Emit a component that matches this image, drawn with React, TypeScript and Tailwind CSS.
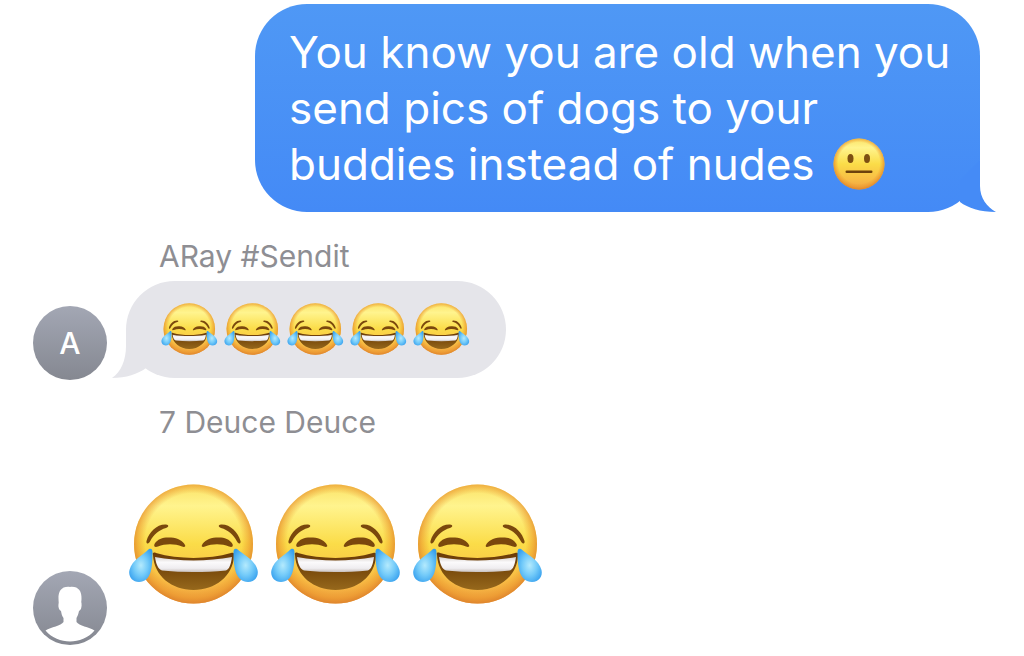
import type { ReactNode } from 'react';

interface EmojiProps {
  className?: string;
}

function EmojiDefs() {
  return (
    <svg className="absolute h-0 w-0" aria-hidden="true">
      <defs>
        <linearGradient id="face" x1="0" y1="0" x2="0" y2="1">
          <stop offset="0" stopColor="#fbe266" />
          <stop offset="0.18" stopColor="#fff48e" />
          <stop offset="0.5" stopColor="#fbdc48" />
          <stop offset="0.8" stopColor="#f8bd45" />
          <stop offset="1" stopColor="#f0a340" />
        </linearGradient>
        <radialGradient id="faceEdge" cx="0.5" cy="0.48" r="0.52">
          <stop offset="0.78" stopColor="#ea942c" stopOpacity="0" />
          <stop offset="0.9" stopColor="#ea942c" stopOpacity="0.55" />
          <stop offset="1" stopColor="#de832c" stopOpacity="0.95" />
        </radialGradient>
        <linearGradient id="teeth" x1="0" y1="0" x2="0" y2="1">
          <stop offset="0" stopColor="#d9d3d0" />
          <stop offset="0.35" stopColor="#fbfafb" />
          <stop offset="0.75" stopColor="#efedf0" />
          <stop offset="1" stopColor="#c9c1be" />
        </linearGradient>
        <linearGradient id="mouth" x1="0" y1="0" x2="0" y2="1">
          <stop offset="0" stopColor="#6a3a08" />
          <stop offset="0.5" stopColor="#7c4d0d" />
          <stop offset="1" stopColor="#96681c" />
        </linearGradient>
        <radialGradient id="tear" cx="0.5" cy="0.5" r="0.6">
          <stop offset="0" stopColor="#b4eafd" />
          <stop offset="0.5" stopColor="#74cbf9" />
          <stop offset="1" stopColor="#359fee" />
        </radialGradient>
      </defs>
    </svg>
  );
}

function JoyEmoji({ className }: EmojiProps) {
  return (
    <svg viewBox="0 0 130 120" className={className} role="img" aria-label="face with tears of joy">
      <circle cx="64.5" cy="60" r="59.5" fill="url(#face)" />
      <circle cx="64.5" cy="60" r="59.5" fill="url(#faceEdge)" />
      <g fill="#7a480d">
        <path d="M17.500 57C20 48 28 40 37 40.5C40 41 40 43 37 44C30 46 25 50 21 57.5C19 60.500 17 60 17.500 57Z" />
        <path d="M111.500 57C109 48 101 40 92 40.500C89 41 89 43 92 44C99 46 104 50 108 57.500C110 60.500 112 60 111.500 57Z" />
        <path d="M25.500 60C29 54 35 53 42 53.500C49 54 54 57 56 61C57 63 55 63.500 53 62.500C46 59.500 36 59.500 29 62.500C26 63.500 24.500 62.500 25.500 60Z" />
        <path d="M103.500 60C100 54 94 53 87 53.500C80 54 75 57 73 61C72 63 74 63.500 76 62.500C83 59.500 93 59.500 100 62.500C103 63.500 104.500 62.500 103.500 60Z" />
      </g>
      <path
        d="M24 71C23 69 24.500 68 27 69C50 75.500 79 75.500 102 69C104.500 68 106 69 105 72C104 92 86 106 64.500 106C43 106 25 92 24 71Z"
        fill="url(#mouth)"
      />
      <path
        d="M26 73C50 77.500 79 77.500 103 73C102 80 100.500 85 97 86.500C75 88.500 54 88.500 33 86.500C29 85 27 80 26 73Z"
        fill="url(#teeth)"
      />
      <path d="M20 65C23 64 23.500 66 23.500 69C23.500 84 22 98 10 98C3 98 -1 92 0.500 86C3 76 14 71 20 65Z" fill="url(#tear)" />
      <path d="M108 65C105 64 104.500 66 104.500 69C104.500 84 107 98 119 98C126 98 130 92 128.500 86C126 76 115 71 108 65Z" fill="url(#tear)" />
    </svg>
  );
}

function NeutralEmoji({ className }: EmojiProps) {
  return (
    <svg viewBox="0 0 52 52" className={className} role="img" aria-label="neutral face">
      <circle cx="26" cy="26" r="25.500" fill="url(#face)" />
      <circle cx="26" cy="26" r="25.500" fill="url(#faceEdge)" />
      <ellipse cx="17.500" cy="20.500" rx="3" ry="4.500" fill="#7d4f12" />
      <ellipse cx="34" cy="20.500" rx="3" ry="4.500" fill="#7d4f12" />
      <rect x="12.500" y="32.500" width="27" height="2.500" rx="1.250" fill="#6d420c" />
    </svg>
  );
}

function Avatar({ label, children }: { label: string; children: ReactNode }) {
  return (
    <div
      role="img"
      aria-label={label}
      className="flex size-[74px] shrink-0 items-center justify-center overflow-hidden rounded-full bg-linear-to-b from-[#a3a7b4] to-[#858891] text-3xl font-medium text-white"
    >
      {children}
    </div>
  );
}

function SenderName({ children }: { children: ReactNode }) {
  return <h2 className="pl-[126px] text-3xl leading-9 text-[#8e8e93]">{children}</h2>;
}

export default function App() {
  return (
    <main className="min-h-screen overflow-x-hidden bg-white pt-1 pr-11 pb-2 pl-[33px] font-['Inter','Liberation_Sans',sans-serif]">
      <EmojiDefs />

      {/* Sent message */}
      <div className="flex justify-end">
        <div className="relative w-[725px] rounded-[52px] bg-linear-to-b from-[#4f98f5] to-[#448af6] py-5 pr-6 pl-[34px] text-white">
          <p className="text-[44px] leading-14">
            You know you are old when you
            <br />
            send pics of dogs to your
            <br />
            buddies instead of nudes <NeutralEmoji className="ml-1.5 inline-block size-[52px] align-[-10px]" />
          </p>
          <svg viewBox="0 0 36 52" className="absolute -right-4 bottom-0 h-[52px] w-9" aria-hidden="true">
            <path d="M0 42C8 48 20 52 36 52C27 47 20 38 20 26V0L0 20Z" fill="#458bf6" />
          </svg>
        </div>
      </div>

      {/* Received messages */}
      <section className="mt-[26px]">
        <SenderName>ARay #Sendit</SenderName>
        <div className="mt-[7px] flex items-end gap-[19px]">
          <Avatar label="ARay">A</Avatar>
          <div className="relative mb-0.5 flex h-[97px] items-center gap-1.5 rounded-full bg-[#e5e5ea] pr-9 pl-[35px]">
            {[0, 1, 2, 3, 4].map((i) => (
              <JoyEmoji key={i} className="mb-0.5 h-[52px] w-[57px]" />
            ))}
            <svg viewBox="0 0 34 50" className="absolute bottom-0 -left-3.5 h-[50px] w-[34px]" aria-hidden="true">
              <path d="M34 40C26 46 14 50 0 50C9 44 14 32 14 18V0L34 20Z" fill="#e5e5ea" />
            </svg>
          </div>
        </div>
      </section>

      <section className="mt-6">
        <SenderName>7 Deuce Deuce</SenderName>
        <div className="mt-11 flex items-end gap-[22px]">
          <Avatar label="7 Deuce Deuce">
            <svg viewBox="0 0 74 74" className="size-full" aria-hidden="true">
              <path
                d="M37 16C45 15 49 20 48.500 28C48.500 30 48 31 48.500 32C49 36 48 39 46 40C45.500 43 44.500 45 43.500 47V51C46 55 56 56 61.500 59.500C55 67 46 70.500 37 70.500C28 70.500 19 67 12.500 59.500C18 56 28 55 30.500 51V47C29 45 28.500 43 28 40C26 39 25 36 25.500 33C26 32 25.500 30 25.500 28C25 20 29 15 37 16Z"
                fill="#ffffff"
              />
            </svg>
          </Avatar>
          <div className="mb-[41px] flex gap-3">
            {[0, 1, 2].map((i) => (
              <JoyEmoji key={i} className="h-[120px] w-[130px]" />
            ))}
          </div>
        </div>
      </section>
    </main>
  );
}
